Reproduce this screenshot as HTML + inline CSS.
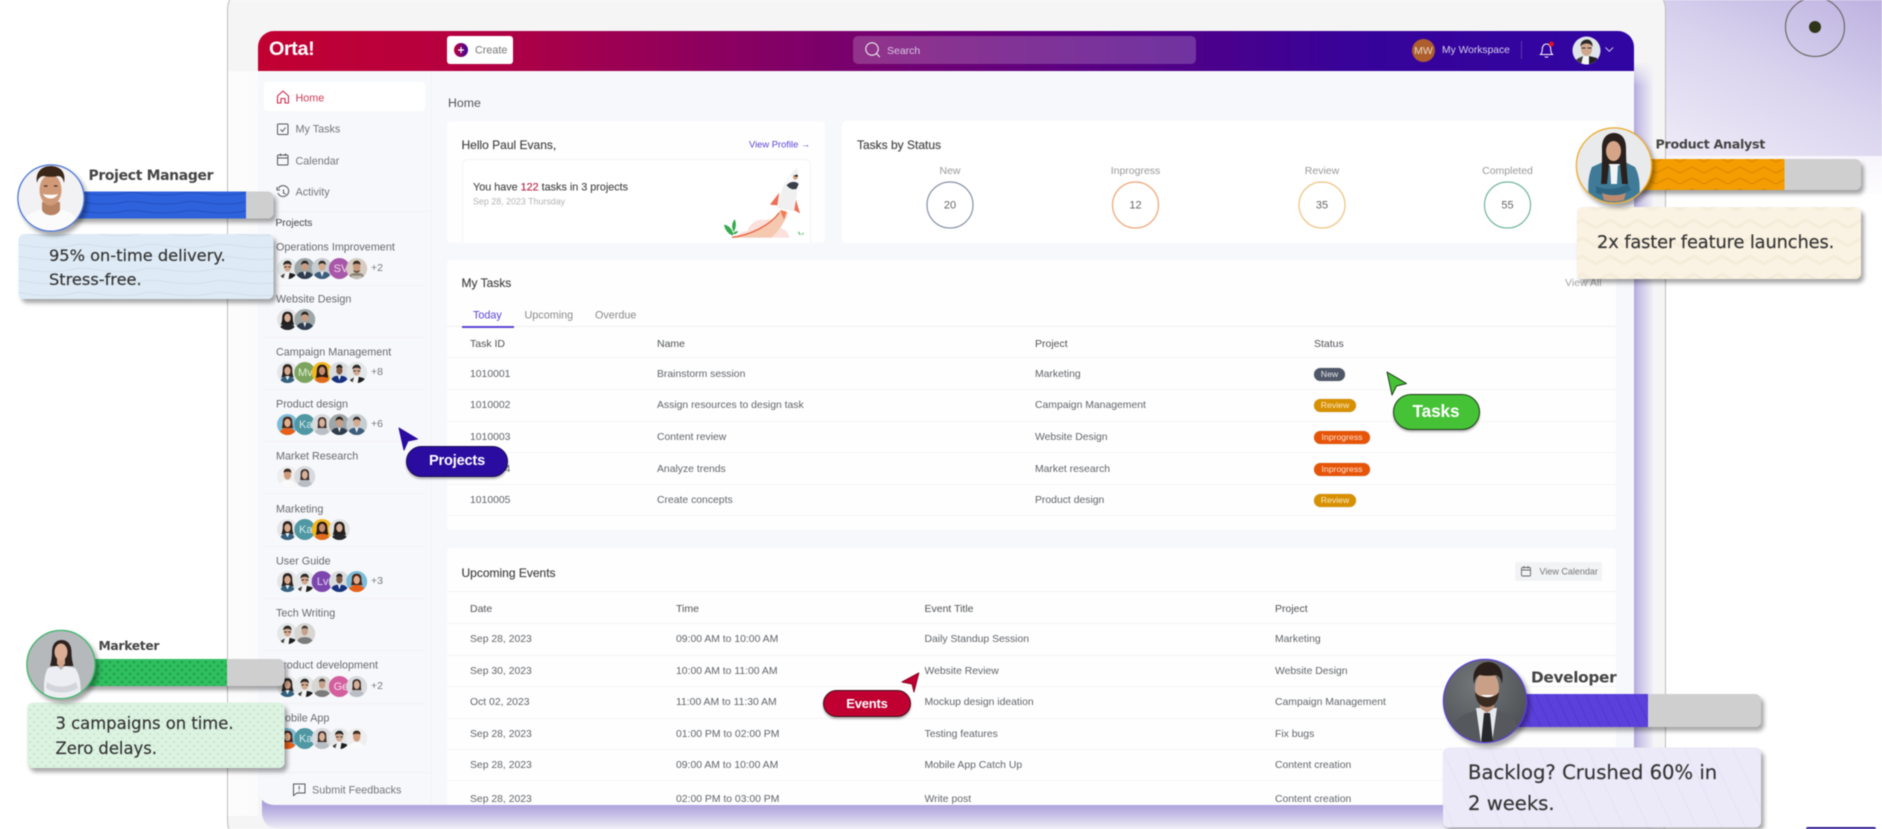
<!DOCTYPE html>
<html lang="en"><head><meta charset="utf-8"><title>Orta</title>
<style>
html,body{margin:0;padding:0;width:1882px;height:829px;overflow:hidden;background:#fff}
#r{position:relative;width:1882px;height:829px;overflow:hidden;font-family:"Liberation Sans",sans-serif;filter:blur(.45px)}
#r div,#r svg{position:absolute}
.t{white-space:nowrap;line-height:1;transform:translateY(-50%);color:#666;font-size:10.5px}
.c{transform:translate(-50%,-50%)}
.h{color:#505357;font-size:10.5px}
.s{color:#666a6f;font-size:10.8px}
.n{color:#62656a;font-size:10.4px}
.ti{color:#444;font-size:12px;-webkit-text-stroke:.15px #444}
.g{color:#999;font-size:10.5px}
.b{height:13px;border-radius:7px;color:#fbe9c8;font-size:8.7px;line-height:13px;text-align:center;box-shadow:0 0 1px rgba(0,0,0,.3)}
.card{background:#fefefe;border-radius:4px}
.l{height:1px;background:#f4f4f6}
.sl{height:1px;background:#f3f1f4;left:264px;width:161px}
.ov{font-family:"DejaVu Sans",sans-serif;color:#363636;white-space:nowrap;line-height:1;transform:translateY(-50%);-webkit-text-stroke:.2px #363636}
.nm{font-family:"DejaVu Sans",sans-serif;font-weight:bold;color:#454545;white-space:nowrap;line-height:1;transform:translateY(-50%)}
.pill{color:#fff;font-weight:bold;text-align:center;border-radius:20px;box-sizing:border-box;box-shadow:0 2px 2px rgba(0,0,0,.3)}
</style></head><body><div id="r">

<!-- top right purple -->
<div style="left:1640px;top:0;width:242px;height:156px;background:linear-gradient(205deg,#bdb2e1 0%,#d9d3ee 45%,#f1eef9 100%)"></div>
<div style="left:1640px;top:156px;width:242px;height:38px;background:linear-gradient(180deg,#f8f6fc,#fdfcfe)"></div>
<svg style="left:1770px;top:0" width="90" height="62"><circle cx="45" cy="27" r="29.5" fill="none" stroke="#6a6a68" stroke-width="1.2"/><circle cx="45" cy="27" r="6" fill="#2f3518"/></svg>

<!-- frame -->
<div style="left:227px;top:-14px;width:1439px;height:859px;background:#f5f5f6;border:1px solid #bcbcbc;border-radius:24px;box-sizing:border-box"></div>
<div style="left:228px;top:71px;width:30px;height:745px;background:linear-gradient(90deg,#fdfdfd,#fbfbfc)"></div>

<!-- app shadow -->
<div style="left:1633px;top:62px;width:20px;height:745px;background:linear-gradient(90deg,#aea3dc,#c8c1e6 30%,#f1f0f6);-webkit-mask-image:linear-gradient(180deg,transparent,#000 24px);mask-image:linear-gradient(180deg,transparent,#000 24px)"></div>
<div style="left:262px;top:800px;width:1391px;height:29px;background:linear-gradient(180deg,#aea3dc,#aea3dc 17%,#c2bae5 45%,#efeef6 100%);border-bottom-left-radius:16px"></div>

<!-- app -->
<div style="left:258px;top:70px;width:1376px;height:735px;background:#f7f8fc;border-bottom-left-radius:16px"></div>
<div style="left:258px;top:31px;width:1376px;height:40px;border-radius:16px 16px 0 0;background:linear-gradient(90deg,#c20032 0%,#b50040 15%,#93005a 30%,#740070 45%,#5e0080 58%,#4d008a 68%,#37039a 80%,#3105a2 100%)"></div>
<div style="left:269px;top:50px;font-size:19.8px;font-weight:bold;color:#fff;letter-spacing:-.4px" class="t">Orta!</div>

<div style="left:447px;top:36px;width:66px;height:28px;background:#fff;border-radius:3px"></div>
<svg style="left:454px;top:43px" width="14" height="14"><defs><linearGradient id="cg" x1="0" x2="1"><stop offset="0" stop-color="#c0003a"/><stop offset="1" stop-color="#3a049c"/></linearGradient></defs><circle cx="7" cy="7" r="7" fill="url(#cg)"/><path d="M7 4v6M4 7h6" stroke="#fff" stroke-width="1.2"/></svg>
<div class="t" style="left:475px;top:51px;color:#777;font-size:10.8px">Create</div>

<div style="left:853px;top:36px;width:343px;height:28px;border-radius:5px;background:rgba(255,255,255,.2)"></div>
<svg style="left:864px;top:41px" width="18" height="18" fill="none" stroke="#eee" stroke-width="1.1"><circle cx="8" cy="8" r="6.2"/><path d="M12.5 12.5l3.3 3.5"/></svg>
<div class="t" style="left:887px;top:51px;color:#d9c8e4;font-size:10.5px">Search</div>

<div style="left:1411.5px;top:38.5px;width:23px;height:23px;border-radius:50%;background:#ac5e2c"></div>
<div class="t c" style="left:1423.5px;top:51px;color:#ecd6c4;font-size:10.5px">MW</div>
<div class="t" style="left:1442px;top:51px;color:#d6d0ec;font-size:10.3px">My Workspace</div>
<div style="left:1521px;top:41px;width:1px;height:18px;background:#5a37ae"></div>
<svg style="left:1538px;top:40px" width="18" height="19" fill="none" stroke="#fff" stroke-width="1"><path d="M2.5 14.5c1.5-1.4 1.8-3 1.8-5.5 0-3 1.8-5 4.2-5s4.2 2 4.2 5c0 2.5.3 4.1 1.8 5.5z"/><path d="M6.8 16.5c.8 1 2.6 1 3.4 0"/><circle cx="13.4" cy="4" r="2.5" fill="#e01020" stroke="none"/></svg>
<svg style="left:1572px;top:36px" width="29" height="29"><defs><clipPath id="uc"><circle cx="14.5" cy="14.5" r="14"/></clipPath></defs><g clip-path="url(#uc)"><rect width="29" height="29" fill="#dfe5e8"/><path d="M3 29c1-7 6-9 11.5-9s10 2 11.5 9z" fill="#f4f4f4"/><path d="M17 20l8 2 3 7h-11z" fill="#222"/><path d="M2 29l3-6 6-3-2 9z" fill="#3a3a3a"/><ellipse cx="14.5" cy="13" rx="5.5" ry="7" fill="#d0a68c"/><path d="M8.5 11c-.5-5 3-7.5 6.500-7.5s6 3 5.500 7.500c-1-2.500-3-3.500-6-3.500s-5 1-6 3.500z" fill="#2c2a28"/><path d="M9.500 12h4M15.500 12h4" stroke="#333" stroke-width="1"/></g></svg>
<svg style="left:1604px;top:46px" width="11" height="8" fill="none" stroke="#cfc8ec" stroke-width="1"><path d="M1.5 1.5l3.8 3.8 3.800-3.800"/></svg>

<!-- sidebar -->
<div style="left:431px;top:71px;width:1px;height:734px;background:#f2f3f6"></div>
<div style="left:264px;top:82px;width:161px;height:29px;background:#fff;border-radius:3px"></div>
<svg style="left:276px;top:89px" width="14" height="16" fill="none" stroke="#d0294f" stroke-width="1.1"><path d="M1.5 7L7 2l5.500 5v7H9V9.500H5V14H1.500z" stroke-linejoin="round"/></svg>
<div class="t" style="left:295.5px;top:98.8px;color:#cf3a58;font-size:10.8px">Home</div>
<svg style="left:276px;top:122px" width="14" height="15" fill="none" stroke="#555" stroke-width="1"><rect x="1.5" y="2" width="10.5" height="10.5" rx="1"/><path d="M4.5 7.5l2 2 3-4"/></svg>
<div class="t" style="left:295.5px;top:130px;color:#777;font-size:10.8px">My Tasks</div>
<svg style="left:276px;top:152px" width="14" height="15" fill="none" stroke="#555" stroke-width="1"><rect x="1.5" y="3" width="10.5" height="10" rx="1"/><path d="M1.5 6h10.5M4.5 1.500V4M9.500 1.500V4"/></svg>
<div class="t" style="left:295.5px;top:161.5px;color:#777;font-size:10.8px">Calendar</div>
<svg style="left:276px;top:185px" width="14" height="15" fill="none" stroke="#555" stroke-width="1"><path d="M2.3 3.5A5.5 5.5 0 1 1 2 8"/><path d="M1 2v3h3M7.5 4.5V8l2.3 1.3"/></svg>
<div class="t" style="left:295.5px;top:193px;color:#777;font-size:10.8px">Activity</div>
<div class="sl" style="left:258px;width:173px;top:211px"></div>
<div class="t" style="left:275.5px;top:224px;color:#555;font-size:10.2px;-webkit-text-stroke:.1px #555">Projects</div>

<div class="t s" style="left:276px;top:248px">Operations Improvement</div><div class="sl" style="top:285px"></div>
<div class="t s" style="left:276px;top:300.3px">Website Design</div><div class="sl" style="top:337px"></div>
<div class="t s" style="left:276px;top:353px">Campaign Management</div><div class="sl" style="top:389px"></div>
<div class="t s" style="left:276px;top:405px">Product design</div><div class="sl" style="top:441px"></div>
<div class="t s" style="left:276px;top:457px">Market Research</div><div class="sl" style="top:493px"></div>
<div class="t s" style="left:276px;top:510px">Marketing</div><div class="sl" style="top:546px"></div>
<div class="t s" style="left:276px;top:562px">User Guide</div><div class="sl" style="top:598px"></div>
<div class="t s" style="left:276px;top:614px">Tech Writing</div><div class="sl" style="top:650px"></div>
<div class="t s" style="left:276px;top:666px">Product development</div><div class="sl" style="top:703px"></div>
<div class="t s" style="left:276px;top:719px">Mobile App</div><div class="sl" style="left:258px;width:173px;top:772px"></div>
<div class="t g" style="left:371px;top:268px;font-size:10.5px;color:#777">+2</div>
<div class="t g" style="left:371px;top:372px;color:#777">+8</div>
<div class="t g" style="left:371px;top:424px;color:#777">+6</div>
<div class="t g" style="left:371px;top:581px;color:#777">+3</div>
<div class="t g" style="left:371px;top:686px;color:#777">+2</div>
<svg style="left:292px;top:782px" width="15" height="15" fill="none" stroke="#555" stroke-width="1"><path d="M1.5 2h11.5v9H5l-3.5 2.5z"/><path d="M7.2 4v3.5M7.2 8.8v.8"/></svg>
<div class="t" style="left:312px;top:791px;color:#777;font-size:10.8px">Submit Feedbacks</div>

<svg style="left:0;top:0" width="1882" height="829">
<defs>
<clipPath id="ci"><circle cx="20" cy="20" r="20"/></clipPath>
<symbol id="wt" viewBox="0 0 40 40"><g clip-path="url(#ci)"><rect width="40" height="40" fill="#e5e5e7"/><path d="M11 14c0-7 4-10 9-10s9 3 9 10c0 6 1 12 3 15H8c2-3 3-9 3-15z" fill="#2a221f"/><path d="M6 40c1-10 6-13 14-13s13 3 14 13z" fill="#33607e"/><path d="M16 27l4 8 4-8z" fill="#eee"/><ellipse cx="20" cy="17" rx="6" ry="8" fill="#d8a98c"/></g></symbol>
<symbol id="mg" viewBox="0 0 40 40"><g clip-path="url(#ci)"><rect width="40" height="40" fill="#e3e7e8"/><path d="M4 40c1-10 7-13 16-13s15 3 16 13z" fill="#f3f3f3"/><path d="M24 28l10 3 4 9H22z" fill="#1d1d1d"/><path d="M5 40l3-7 7-4-3 11z" fill="#444"/><ellipse cx="20" cy="17" rx="7" ry="9" fill="#d3a88e"/><path d="M12 15c-1-7 4-10 8.5-10s8 4 7 10c-1-3-4-4-7.500-4s-7 1-8 4z" fill="#2a2827"/><path d="M13.500 17h5M21.500 17h5" stroke="#2a2a2a" stroke-width="1.5"/></g></symbol>
<symbol id="sd" viewBox="0 0 40 40"><g clip-path="url(#ci)"><rect width="40" height="40" fill="#9fa6a8"/><path d="M3 40c1-11 7-14 17-14s16 3 17 14z" fill="#2f3c4d"/><path d="M17 26l3 9 3-9z" fill="#e8e8e8"/><ellipse cx="20" cy="16" rx="6.5" ry="8" fill="#c99d83"/><path d="M13 14c-.5-6 3.500-9 7-9s8 3 7 9c-1.500-3-4-4-7-4s-5.500 1-7 4z" fill="#26221f"/></g></symbol>
<symbol id="bs" viewBox="0 0 40 40"><g clip-path="url(#ci)"><rect width="40" height="40" fill="#c7ced2"/><path d="M3 40c1-11 7-14 17-14s16 3 17 14z" fill="#3d5d7c"/><path d="M16.5 26l3.500 10 3.500-10z" fill="#eee"/><ellipse cx="20" cy="16" rx="6.5" ry="8" fill="#d4a98e"/><path d="M13 14c-.5-6 3.500-9 7-9s8 3 7 9c-1.500-3-4-4-7-4s-5.500 1-7 4z" fill="#2d2825"/></g></symbol>
<symbol id="bg" viewBox="0 0 40 40"><g clip-path="url(#ci)"><rect width="40" height="40" fill="#d6ccc1"/><path d="M4 40c1-9 7-12 16-12s15 3 16 12z" fill="#8c8375"/><path d="M10 34h20v2H10zM9 37h22v2H9z" fill="#d8d8d0"/><ellipse cx="20" cy="17" rx="7" ry="9" fill="#c8987a"/><path d="M13 22c1 5 4 6 7 6s6-1 7-6c-1 2-4 3-7 3s-6-1-7-3z" fill="#5c4738"/><path d="M13 14c-1-6 3-9 7-9s8 3 7 9c-1-3-4-3-7-3s-6 0-7 3z" fill="#3a2d24"/></g></symbol>
<symbol id="dw" viewBox="0 0 40 40"><g clip-path="url(#ci)"><rect width="40" height="40" fill="#e2e2e2"/><path d="M10 16c0-8 5-11 10-11s10 3 10 11c0 6 1 10 3 14H7c2-4 3-8 3-14z" fill="#211d1c"/><path d="M5 40c1-9 6-12 15-12s14 3 15 12z" fill="#24262b"/><ellipse cx="20" cy="17" rx="6" ry="8" fill="#d8ae96"/></g></symbol>
<symbol id="yw" viewBox="0 0 40 40"><g clip-path="url(#ci)"><rect width="40" height="40" fill="#f1b720"/><path d="M10 16c0-8 5-11 10-11s10 3 10 11c0 6 1 10 2 14H8c1-4 2-8 2-14z" fill="#2b1a14"/><path d="M5 40c1-9 6-12 15-12s14 3 15 12z" fill="#e06a1d"/><ellipse cx="20" cy="17" rx="6" ry="8" fill="#c48e6e"/></g></symbol>
<symbol id="nv" viewBox="0 0 40 40"><g clip-path="url(#ci)"><rect width="40" height="40" fill="#d9dcdf"/><path d="M3 40c1-11 7-14 17-14s16 3 17 14z" fill="#15317f"/><path d="M17 26l3 9 3-9z" fill="#f3f3f3"/><ellipse cx="20" cy="16" rx="6" ry="8" fill="#7f5a45"/><path d="M14 12c0-5 3-7 6-7s6 2 6 7c-2-2-4-2-6-2s-4 0-6 2z" fill="#201a18"/></g></symbol>
<symbol id="ow" viewBox="0 0 40 40"><g clip-path="url(#ci)"><rect width="40" height="40" fill="#7cbcd8"/><path d="M11 14c0-6 4-9 9-9s9 3 9 9c0 6 1 10 2 13H9c1-3 2-7 2-13z" fill="#4a2418"/><path d="M4 40c1-9 6-13 16-13s15 4 16 13z" fill="#e85f17"/><ellipse cx="20" cy="17" rx="6" ry="8" fill="#e0b08f"/></g></symbol>
<symbol id="gw" viewBox="0 0 40 40"><g clip-path="url(#ci)"><rect width="40" height="40" fill="#d9dadd"/><path d="M12 14c0-6 4-8 8-8s8 2 8 8c0 6 0 10 1 13H11c1-3 1-7 1-13z" fill="#3d322d"/><path d="M5 40c1-9 6-13 15-13s14 4 15 13z" fill="#b9bdc4"/><ellipse cx="20" cy="17" rx="5.5" ry="8" fill="#d9b199"/></g></symbol>
<symbol id="tm" viewBox="0 0 40 40"><g clip-path="url(#ci)"><rect width="40" height="40" fill="#eee"/><path d="M5 40c1-10 7-13 15-13s14 3 15 13z" fill="#fafafa"/><ellipse cx="20" cy="17" rx="7" ry="9" fill="#cf9c7b"/><path d="M13 14c-1-7 3-9 7-9s8 2 7 9c-1-3-4-3-7-3s-6 0-7 3z" fill="#3e2a1e"/></g></symbol>
<symbol id="gm" viewBox="0 0 40 40"><g clip-path="url(#ci)"><rect width="40" height="40" fill="#d8d6d2"/><path d="M4 40c1-10 7-13 16-13s15 3 16 13z" fill="#7b7b7b"/><ellipse cx="20" cy="16" rx="6" ry="8" fill="#c7a08a"/><path d="M14 13c-.5-6 3-8 6-8s6.500 2 6 8c-1-3-3-3-6-3s-5 0-6 3z" fill="#413833"/></g></symbol>
<symbol id="sv" viewBox="0 0 40 40"><circle cx="20" cy="20" r="20" fill="#a957a8"/><text x="9" y="27" font-size="21" fill="#f0dcee" font-family="Liberation Sans">SV</text></symbol>
<symbol id="mv" viewBox="0 0 40 40"><circle cx="20" cy="20" r="20" fill="#7ca45e"/><text x="7" y="27" font-size="21" fill="#e2eed8" font-family="Liberation Sans">Mv</text></symbol>
<symbol id="ka" viewBox="0 0 40 40"><circle cx="20" cy="20" r="20" fill="#4f97a2"/><text x="9" y="27" font-size="21" fill="#d8ecef" font-family="Liberation Sans">Ka</text></symbol>
<symbol id="lv" viewBox="0 0 40 40"><circle cx="20" cy="20" r="20" fill="#7d45ae"/><text x="10" y="27" font-size="21" fill="#e6d8f2" font-family="Liberation Sans">Lv</text></symbol>
<symbol id="ge" viewBox="0 0 40 40"><circle cx="20" cy="20" r="20" fill="#d45f9f"/><text x="9" y="27" font-size="21" fill="#f8dfee" font-family="Liberation Sans">Ge</text></symbol>
</defs>
<g>
<use href="#mg" x="277" y="258" width="21" height="21"/><use href="#sd" x="294.3" y="258" width="21" height="21"/><use href="#bs" x="311.6" y="258" width="21" height="21"/><use href="#sv" x="328.9" y="258" width="21" height="21"/><use href="#bg" x="346.2" y="258" width="21" height="21"/>
<use href="#dw" x="277" y="309" width="21" height="21"/><use href="#sd" x="294.3" y="309" width="21" height="21"/>
<use href="#wt" x="277" y="362" width="21" height="21"/><use href="#mv" x="294.3" y="362" width="21" height="21"/><use href="#yw" x="311.6" y="362" width="21" height="21"/><use href="#nv" x="328.9" y="362" width="21" height="21"/><use href="#mg" x="346.2" y="362" width="21" height="21"/>
<use href="#ow" x="277" y="414" width="21" height="21"/><use href="#ka" x="294.3" y="414" width="21" height="21"/><use href="#gw" x="311.6" y="414" width="21" height="21"/><use href="#sd" x="328.9" y="414" width="21" height="21"/><use href="#bs" x="346.2" y="414" width="21" height="21"/>
<use href="#tm" x="277" y="466" width="21" height="21"/><use href="#gw" x="294.3" y="466" width="21" height="21"/>
<use href="#wt" x="277" y="519" width="21" height="21"/><use href="#ka" x="294.3" y="519" width="21" height="21"/><use href="#yw" x="311.6" y="519" width="21" height="21"/><use href="#dw" x="328.9" y="519" width="21" height="21"/>
<use href="#wt" x="277" y="571" width="21" height="21"/><use href="#mg" x="294.3" y="571" width="21" height="21"/><use href="#lv" x="311.6" y="571" width="21" height="21"/><use href="#nv" x="328.9" y="571" width="21" height="21"/><use href="#ow" x="346.2" y="571" width="21" height="21"/>
<use href="#mg" x="277" y="623" width="21" height="21"/><use href="#gm" x="294.3" y="623" width="21" height="21"/>
<use href="#wt" x="277" y="676" width="21" height="21"/><use href="#mg" x="294.3" y="676" width="21" height="21"/><use href="#gm" x="311.6" y="676" width="21" height="21"/><use href="#ge" x="328.9" y="676" width="21" height="21"/><use href="#gw" x="346.2" y="676" width="21" height="21"/>
<use href="#ow" x="277" y="728" width="21" height="21"/><use href="#ka" x="294.3" y="728" width="21" height="21"/><use href="#gw" x="311.6" y="728" width="21" height="21"/><use href="#mg" x="328.9" y="728" width="21" height="21"/><use href="#tm" x="346.2" y="728" width="21" height="21"/>
</g>
</svg>

<!-- main -->
<div class="t" style="left:448px;top:102.5px;color:#555;font-size:12.3px">Home</div>
<div class="card" style="left:447px;top:121px;width:378px;height:122px"></div>
<div class="t ti" style="left:461.5px;top:145px">Hello Paul Evans,</div>
<div class="t" style="left:749px;top:143.5px;color:#5b45d6;font-size:9.4px">View Profile →</div>
<div style="left:461.5px;top:159px;width:349px;height:84px;border:1px solid #f3f3f6;border-bottom:0;border-radius:6px 6px 0 0;box-sizing:border-box;background:#fff"></div>
<div class="t" style="left:473px;top:187.5px;color:#444;font-size:10.8px;-webkit-text-stroke:.12px #444">You have <span style="color:#d01440">122</span> tasks in 3 projects</div>
<div class="t" style="left:473px;top:201.5px;color:#b3b3b3;font-size:8.9px">Sep 28, 2023 Thursday</div>
<svg style="left:720px;top:160px" width="95" height="85" viewBox="0 0 285 255">
<path d="M50 233c5-14 20-20 32-20 6-18 26-38 52-33 20-6 48 4 50 26 14 2 22 14 24 27z" fill="#fbe0dc"/>
<path d="M36 233C90 228 150 200 182 150l22 8c-10 30-28 55-50 75z" fill="#f4c9b0"/>
<path d="M36 232C90 226 150 196 178 158" fill="none" stroke="#e8613c" stroke-width="4"/>
<path d="M180 150l20 5-8 24z" fill="#ee7b55"/>
<path d="M178 98l-28 36 22 2z" fill="#ee6e56"/><path d="M226 112l14 48-18-10z" fill="#ee6e56"/>
<path d="M232 24c-32 22-52 70-60 120l50 10c10-50 14-100 10-130z" fill="#f0f0f0"/>
<circle cx="218" cy="66" r="20" fill="#f9f9f9"/><path d="M200 76c8-12 28-14 36-4l-6 14c-8 4-20 2-30-10z" fill="#3a3f4a"/><circle cx="226" cy="52" r="7" fill="#d9a07e"/><path d="M220 48l12-5 2 8z" fill="#222"/>
<path d="M36 226c-14-6-22-20-24-32 14 2 26 14 28 30zM40 214c-6-14-4-28 4-36 6 12 4 26-2 36zM38 222c4-6 10-10 16-8-2 6-8 10-16 8z" fill="#36a94f"/>
<path d="M242 226c-6-2-8-6-8-12 5 1 8 6 8 12zM244 224c2-4 5-6 8-6 0 4-3 8-8 6z" fill="#7bc98a"/>
</svg>

<div class="card" style="left:842px;top:121px;width:774px;height:122px;background:#fff"></div>
<div class="t ti" style="left:857px;top:144.5px">Tasks by Status</div>
<div class="t c g" style="left:950px;top:170.5px">New</div>
<div class="t c g" style="left:1135.5px;top:170.5px">Inprogress</div>
<div class="t c g" style="left:1322px;top:170.5px">Review</div>
<div class="t c g" style="left:1507.5px;top:170.5px">Completed</div>
<svg style="left:920px;top:175px" width="620" height="60" fill="none" stroke-width="1.2"><circle cx="30" cy="30" r="23" stroke="#8590a5"/><circle cx="215.5" cy="30" r="23" stroke="#f0a273"/><circle cx="402" cy="30" r="23" stroke="#eec27d"/><circle cx="587.5" cy="30" r="23" stroke="#71b3a0"/></svg>
<div class="t c" style="left:950px;top:206px;font-size:11px">20</div>
<div class="t c" style="left:1135.5px;top:206px;font-size:11px">12</div>
<div class="t c" style="left:1322px;top:206px;font-size:11px">35</div>
<div class="t c" style="left:1507.5px;top:206px;font-size:11px">55</div>

<div class="card" style="left:447px;top:260px;width:1169px;height:270px"></div>
<div class="t ti" style="left:461.5px;top:283px">My Tasks</div>
<div class="t" style="left:1565px;top:283px;color:#a5a5a5;font-size:10.5px">View All</div>
<div class="t" style="left:473px;top:315.8px;color:#5b45d6;font-size:10.8px">Today</div>
<div class="t" style="left:524.5px;top:315.8px;color:#8a8a8a;font-size:10.8px">Upcoming</div>
<div class="t" style="left:595px;top:315.8px;color:#8a8a8a;font-size:10.8px">Overdue</div>
<div class="l" style="left:447px;top:326px;width:1169px;background:#efeff2"></div>
<div style="left:461.5px;top:326px;width:52px;height:1.5px;background:#5b45d6"></div>
<div class="l" style="left:447px;top:357px;width:1169px"></div><div class="l" style="left:447px;top:389px;width:1169px"></div><div class="l" style="left:447px;top:421px;width:1169px"></div><div class="l" style="left:447px;top:452px;width:1169px"></div><div class="l" style="left:447px;top:484px;width:1169px"></div><div class="l" style="left:447px;top:515px;width:1169px"></div>
<div class="t h" style="left:470px;top:344px">Task ID</div><div class="t h" style="left:657px;top:344px">Name</div><div class="t h" style="left:1035px;top:344px">Project</div><div class="t h" style="left:1314px;top:344px">Status</div>
<div class="t n" style="left:470px;top:374.5px">1010001</div><div class="t n" style="left:657px;top:374.5px">Brainstorm session</div><div class="t n" style="left:1035px;top:374.5px">Marketing</div>
<div class="t n" style="left:470px;top:406px">1010002</div><div class="t n" style="left:657px;top:406px">Assign resources to design task</div><div class="t n" style="left:1035px;top:406px">Campaign Management</div>
<div class="t n" style="left:470px;top:437.5px">1010003</div><div class="t n" style="left:657px;top:437.5px">Content review</div><div class="t n" style="left:1035px;top:437.5px">Website Design</div>
<div class="t n" style="left:470px;top:469.5px">1010004</div><div class="t n" style="left:657px;top:469.5px">Analyze trends</div><div class="t n" style="left:1035px;top:469.5px">Market research</div>
<div class="t n" style="left:470px;top:500.5px">1010005</div><div class="t n" style="left:657px;top:500.5px">Create concepts</div><div class="t n" style="left:1035px;top:500.5px">Product design</div>
<div class="b" style="left:1314px;top:367.5px;width:31px;background:#4f5768;color:#e5e7ea">New</div>
<div class="b" style="left:1314px;top:399px;width:42px;background:#d79000">Review</div>
<div class="b" style="left:1314px;top:431px;width:56px;background:#e65408;color:#fbe1cf">Inprogress</div>
<div class="b" style="left:1314px;top:462.5px;width:56px;background:#e65408;color:#fbe1cf">Inprogress</div>
<div class="b" style="left:1314px;top:493.5px;width:42px;background:#d79000">Review</div>

<div class="card" style="left:447px;top:548px;width:1169px;height:257px;border-radius:4px 4px 0 0"></div>
<div class="t ti" style="left:461.5px;top:572.5px">Upcoming Events</div>
<div style="left:1515px;top:562px;width:87px;height:19px;background:#f2f3f5;border-radius:2px"></div>
<svg style="left:1520px;top:565px" width="13" height="13" fill="none" stroke="#666" stroke-width=".9"><rect x="1.5" y="2.5" width="9" height="8.5" rx="1"/><path d="M1.5 5h9M4 1v2.5M8 1v2.5"/></svg>
<div class="t" style="left:1539.5px;top:571.5px;color:#777;font-size:9px">View Calendar</div>
<div class="l" style="left:447px;top:591px;width:1169px;background:#f1f1f4"></div><div class="l" style="left:447px;top:623px;width:1169px"></div><div class="l" style="left:447px;top:655px;width:1169px"></div><div class="l" style="left:447px;top:686px;width:1169px"></div><div class="l" style="left:447px;top:718px;width:1169px"></div><div class="l" style="left:447px;top:749px;width:1169px"></div><div class="l" style="left:447px;top:780px;width:1169px"></div>
<div class="t h" style="left:470px;top:609px">Date</div><div class="t h" style="left:676px;top:609px">Time</div><div class="t h" style="left:924.5px;top:609px">Event Title</div><div class="t h" style="left:1275px;top:609px">Project</div>
<div class="t n" style="left:470px;top:640px">Sep 28, 2023</div><div class="t n" style="left:676px;top:640px">09:00 AM to 10:00 AM</div><div class="t n" style="left:924.5px;top:640px">Daily Standup Session</div><div class="t n" style="left:1275px;top:640px">Marketing</div>
<div class="t n" style="left:470px;top:671.5px">Sep 30, 2023</div><div class="t n" style="left:676px;top:671.5px">10:00 AM to 11:00 AM</div><div class="t n" style="left:924.5px;top:671.5px">Website Review</div><div class="t n" style="left:1275px;top:671.5px">Website Design</div>
<div class="t n" style="left:470px;top:703px">Oct 02, 2023</div><div class="t n" style="left:676px;top:703px">11:00 AM to 11:30 AM</div><div class="t n" style="left:924.5px;top:703px">Mockup design ideation</div><div class="t n" style="left:1275px;top:703px">Campaign Management</div>
<div class="t n" style="left:470px;top:734.5px">Sep 28, 2023</div><div class="t n" style="left:676px;top:734.5px">01:00 PM to 02:00 PM</div><div class="t n" style="left:924.5px;top:734.5px">Testing features</div><div class="t n" style="left:1275px;top:734.5px">Fix bugs</div>
<div class="t n" style="left:470px;top:766px">Sep 28, 2023</div><div class="t n" style="left:676px;top:766px">09:00 AM to 10:00 AM</div><div class="t n" style="left:924.5px;top:766px">Mobile App Catch Up</div><div class="t n" style="left:1275px;top:766px">Content creation</div>
<div class="t n" style="left:470px;top:799.5px">Sep 28, 2023</div><div class="t n" style="left:676px;top:799.5px">02:00 PM to 03:00 PM</div><div class="t n" style="left:924.5px;top:799.5px">Write post</div><div class="t n" style="left:1275px;top:799.5px">Content creation</div>

<!-- callouts -->
<svg style="left:0;top:0" width="1882" height="829">
<path d="M399 428L417.5 439 408 441 404 450z" fill="#2a0ca0" stroke="#2a0ca0" stroke-linejoin="round"/>
<path d="M1387 372L1406.5 383.5 1396.5 386 1392 395z" fill="#46c236" stroke="#1d3d1a" stroke-linejoin="round"/>
<path d="M918.8 673L902 682 912 684 914 692z" fill="#c00030" stroke="#8d0024" stroke-linejoin="round"/>
</svg>
<div class="pill" style="left:406px;top:446px;width:102px;height:31px;background:#2a0ca0;border:1px solid #1a0a55;line-height:29px;font-size:14.6px;letter-spacing:-.2px">Projects</div>
<div class="pill" style="left:1392.5px;top:394px;width:87px;height:36px;background:#46c236;border:1.5px solid #1d3d1a;line-height:33px;font-size:17.2px;letter-spacing:-.1px">Tasks</div>
<div class="pill" style="left:823px;top:690px;width:88px;height:27px;background:#c00030;border:1px solid #40101c;line-height:25px;font-size:13px;letter-spacing:-.2px">Events</div>

<!-- overlays -->
<svg style="left:0;top:0" width="1882" height="829">
<defs>
<filter id="sh" x="-10%" y="-20%" width="125%" height="150%"><feDropShadow dx="3" dy="4" stdDeviation="2" flood-color="#000" flood-opacity=".35"/></filter>
<pattern id="wb" width="60" height="9" patternUnits="userSpaceOnUse"><path d="M0 5C15 0 30 9 60 5" fill="none" stroke="#214fc2" stroke-width="1"/></pattern>
<pattern id="wl" width="70" height="12" patternUnits="userSpaceOnUse"><path d="M0 6C18 0 35 12 70 6" fill="none" stroke="#d2dde7" stroke-width="1"/></pattern>
<pattern id="dg" width="8" height="8" patternUnits="userSpaceOnUse"><circle cx="2" cy="2" r="1.3" fill="#23a04c"/><circle cx="6" cy="6" r="1.3" fill="#23a04c"/></pattern>
<pattern id="dl" width="8" height="8" patternUnits="userSpaceOnUse"><circle cx="2" cy="2" r="1" fill="#c5e0cc"/><circle cx="6" cy="6" r="1" fill="#c5e0cc"/></pattern>
<pattern id="zo" width="24" height="11" patternUnits="userSpaceOnUse"><path d="M0 8l12-6 12 6" fill="none" stroke="#e08c00" stroke-width="1.5"/></pattern>
<pattern id="zl" width="28" height="18" patternUnits="userSpaceOnUse"><path d="M0 12l14-8 14 8" fill="none" stroke="#f5ecda" stroke-width="3"/></pattern>
<pattern id="sp" width="9" height="9" patternUnits="userSpaceOnUse" patternTransform="rotate(-25)"><path d="M0 0V9" stroke="#4e33c9" stroke-width="1.5"/></pattern>
<pattern id="sl" width="22" height="22" patternUnits="userSpaceOnUse" patternTransform="rotate(-25)"><path d="M0 0V22" stroke="#e2def3" stroke-width="1.2"/></pattern>
<clipPath id="pmc"><circle cx="51" cy="198" r="32.5"/></clipPath>
<clipPath id="mkc"><circle cx="61" cy="664.5" r="33.5"/></clipPath>
<clipPath id="pac"><circle cx="1614" cy="165.5" r="37"/></clipPath>
<clipPath id="dvc"><circle cx="1485" cy="701" r="41"/></clipPath>
<radialGradient id="dvb" cx=".4" cy=".3" r=".8"><stop offset="0" stop-color="#73777a"/><stop offset="1" stop-color="#494c50"/></radialGradient>
</defs>

<!-- PM -->
<g filter="url(#sh)"><rect x="60" y="191.5" width="213.5" height="27" rx="6" fill="#cfcfcf"/><rect x="60" y="191.5" width="186" height="27" fill="#2f62dc"/><rect x="60" y="191.5" width="186" height="27" fill="url(#wb)"/></g>
<g filter="url(#sh)"><rect x="18.5" y="234" width="255" height="65" rx="6" fill="#deebf6"/><rect x="18.5" y="234" width="255" height="65" rx="6" fill="url(#wl)"/></g>
<g filter="url(#sh)"><circle cx="51" cy="198" r="33" fill="#f3f2f3" stroke="#4c76d6" stroke-width="1.5"/></g>
<g clip-path="url(#pmc)"><rect x="18" y="164" width="66" height="68" fill="#f2f1f3"/><path d="M20 232c2-14 10-20 22-23h18c12 3 20 9 22 23z" fill="#fbfbfb"/><path d="M42 202h18v8c-3 7-15 7-18 0z" fill="#b78362"/><ellipse cx="50.5" cy="190" rx="11" ry="15.5" fill="#d09a79"/><path d="M37 183c-2-11 5-17 13.500-17s16 5 13.500 17c-1-5-3-7-6-7-4 1-10 1-14 0-3 0-6 2-7 7z" fill="#3a2618"/><path d="M43 194c3 6 12 6 15 0-4 1-11 1-15 0z" fill="#fff"/><path d="M44 186h3.500M54 186h3.500" stroke="#40291c" stroke-width="1.200"/></g>

<!-- Marketer -->
<g filter="url(#sh)"><rect x="70" y="659" width="214.5" height="27" rx="6" fill="#cfcfcf"/><rect x="70" y="659" width="157" height="27" fill="#2fbf5f"/><rect x="70" y="659" width="157" height="27" fill="url(#dg)"/></g>
<g filter="url(#sh)"><rect x="27" y="702.5" width="257.5" height="65.5" rx="6" fill="#dcf3e1"/><rect x="27" y="702.5" width="257.5" height="65.5" rx="6" fill="url(#dl)"/></g>
<g filter="url(#sh)"><circle cx="61" cy="664.5" r="34" fill="#b8bcc0" stroke="#3eb46a" stroke-width="1.5"/></g>
<g clip-path="url(#mkc)"><rect x="26" y="630" width="70" height="70" fill="#b5b9bc"/><path d="M52 652c0-8 4-12 9.500-12s10 4 10 12c0 6 1 10 2 14H50c1-4 2-8 2-14z" fill="#2c2320"/><path d="M45 700c-2-12-1-26 3-32l9-2 4 4 4-4 10 2c5 6 7 20 5 32z" fill="#eceef3"/><path d="M47 682c8 6 20 6 29 0l2 6c-9 6-24 6-32 0z" fill="#d2d5dc"/><path d="M57 658h8v6l-4 4-4-4z" fill="#d3a48c"/><ellipse cx="61" cy="652" rx="6.500" ry="8.500" fill="#dcae96"/></g>

<!-- Analyst -->
<g filter="url(#sh)"><rect x="1620" y="159" width="241" height="31" rx="6" fill="#cfcfcf"/><rect x="1620" y="159" width="164.5" height="31" fill="#f49d00"/><rect x="1620" y="159" width="164.5" height="31" fill="url(#zo)"/></g>
<g filter="url(#sh)"><rect x="1577" y="207" width="284" height="72" rx="6" fill="#faf2e2"/><rect x="1577" y="207" width="284" height="72" rx="6" fill="url(#zl)"/></g>
<g filter="url(#sh)"><circle cx="1614" cy="165.5" r="37.5" fill="#e9eaec" stroke="#eeaa2a" stroke-width="1.5"/></g>
<g clip-path="url(#pac)"><rect x="1576" y="128" width="76" height="76" fill="#e9eaec"/><path d="M1590 204c-3-14-2-28 2-37l11-5 11 6 11-6 10 5c5 9 6 23 3 37z" fill="#3f7b98"/><path d="M1602 148c0-10 5-15 12-15s12 5 12 15c0 14 1 24 2 36h-6l-2-20h-11l-2 20h-6c1-12 1-22 1-36z" fill="#2a211e"/><path d="M1610 164h8l-1 20h-6z" fill="#f4f4f4"/><ellipse cx="1613.500" cy="151" rx="7.500" ry="10" fill="#d6a587"/><path d="M1596 186c10 5 22 3 32-2l3 6c-10 6-24 7-35 3z" fill="#2f6580"/><path d="M1602 193c8 3 16 3 24 0l-2 7c-7 2-14 2-20 0z" fill="#bd8c70"/></g>

<!-- Developer -->
<g filter="url(#sh)"><rect x="1500" y="694" width="261" height="33" rx="6" fill="#cfcfcf"/><rect x="1500" y="694" width="148" height="33" fill="#5b3fdc"/><rect x="1500" y="694" width="148" height="33" fill="url(#sp)"/></g>
<g filter="url(#sh)"><rect x="1443" y="747.5" width="318" height="80" rx="6" fill="#ece9f8"/><rect x="1443" y="747.5" width="318" height="80" rx="6" fill="url(#sl)"/></g>
<g filter="url(#sh)"><circle cx="1485" cy="701" r="41.5" fill="#5a5d60" stroke="#5b3fdc" stroke-width="1.5"/></g>
<g clip-path="url(#dvc)"><rect x="1443" y="659" width="84" height="84" fill="url(#dvb)"/><path d="M1450 743c0-16 6-26 18-30l12-4h12l13 4c10 4 15 14 15 30z" fill="#55585d"/><path d="M1476 708h21l-5 35h-11z" fill="#e6eaee"/><path d="M1484 713h6l3 30h-12z" fill="#26282c"/><path d="M1480 698h14v10l-7 5-7-5z" fill="#b88d75"/><ellipse cx="1487" cy="688" rx="12" ry="17" fill="#c9a087"/><path d="M1475 692c1 11 6 15 12 15s11-4 12-15c-3 4-7 5-12 5s-9-1-12-5z" fill="#3a2a20"/><path d="M1474 684c-3-15 6-22 14-22s17 6 14 22c-1-6-3-8-6-9-5 1-11 1-16 0-3 1-5 3-6 9z" fill="#2a1f1a"/><path d="M1481 695c3 3 10 3 13 0z" fill="#fff"/></g>
<rect x="1806" y="827" width="70" height="4" rx="2" fill="#2f1a8e"/>
</svg>

<div class="nm" style="left:88.5px;top:176.5px;font-size:13.9px;letter-spacing:-.3px">Project Manager</div>
<div class="ov" style="left:49px;top:256px;font-size:16.2px">95% on-time delivery.</div>
<div class="ov" style="left:49px;top:279.5px;font-size:16.2px">Stress-free.</div>
<div class="nm" style="left:98.5px;top:645.5px;font-size:12.3px;letter-spacing:-.3px">Marketer</div>
<div class="ov" style="left:55.5px;top:723.5px;font-size:16.4px">3 campaigns on time.</div>
<div class="ov" style="left:55.5px;top:748.5px;font-size:16.4px">Zero delays.</div>
<div class="nm" style="left:1655.5px;top:145px;font-size:12.7px;letter-spacing:-.3px">Product Analyst</div>
<div class="ov" style="left:1597px;top:242.5px;font-size:17.8px;letter-spacing:-.1px">2x faster feature launches.</div>
<div class="nm" style="left:1531px;top:678px;font-size:15.3px;letter-spacing:-.3px">Developer</div>
<div class="ov" style="left:1468px;top:773px;font-size:19.6px">Backlog? Crushed 60% in</div>
<div class="ov" style="left:1468px;top:804px;font-size:19.6px">2 weeks.</div>
</div></body></html>
